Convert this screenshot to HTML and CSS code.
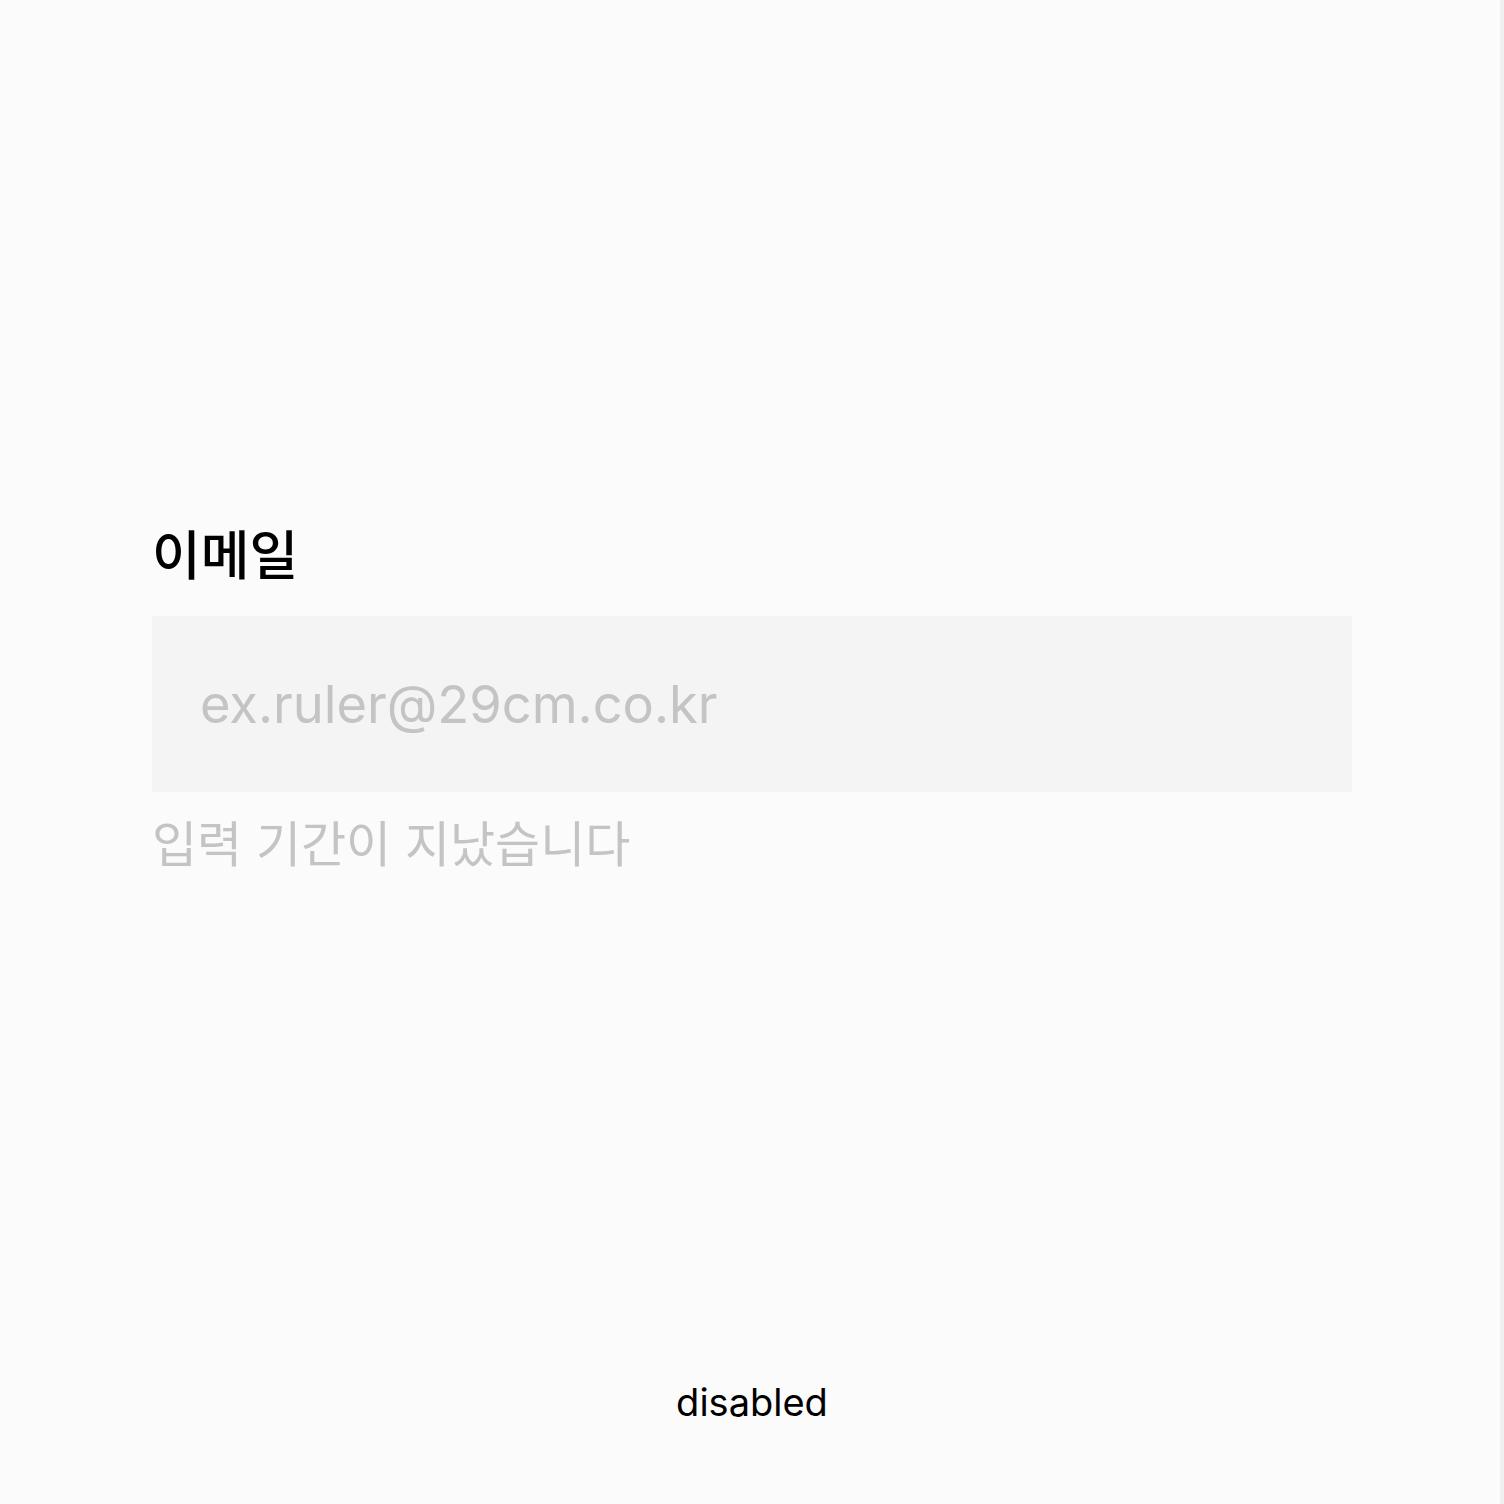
FILE: index.html
```html
<!DOCTYPE html>
<html lang="ko">
<head>
<meta charset="utf-8">
<link rel="stylesheet" href="styles.css">
</head>
<body>
<div class="page">
  <main class="stage">
    <div class="field">
      <label class="label" for="email">이메일</label>
      <input id="email" class="input" type="email" placeholder="ex.ruler@29cm.co.kr" disabled>
      <p class="helper">입력 기간이 지났습니다</p>
    </div>
  </main>
  <div class="caption">disabled</div>
</div>
</body>
</html>
```
FILE: styles.css
```css
html, body {
  margin: 0;
  padding: 0;
}
html {
  background: #f0f0f0;
}
body {
  width: 1500px;
  height: 1504px;
  background: #fbfbfb;
  font-family: Inter, "Noto Sans CJK KR", sans-serif;
  overflow: hidden;
}
.page {
  height: 100%;
  display: flex;
  flex-direction: column;
}
.stage {
  flex: 1;
  display: flex;
  align-items: center;
  padding: 21px 152px 0;
}
.field {
  width: 1200px;
  display: flex;
  flex-direction: column;
}
.label {
  font-size: 53px;
  font-weight: 500;
  color: #000;
  line-height: 64px;
  margin-bottom: 28px;
}
.input {
  box-sizing: border-box;
  width: 1200px;
  height: 176px;
  border: none;
  outline: none;
  background: #f4f4f4;
  padding: 0 48px;
  font-family: Inter, "Noto Sans CJK KR", sans-serif;
  font-size: 52.4px;
  color: #c4c4c4;
}
.input::placeholder {
  color: #c4c4c4;
}
.helper {
  margin: 21px 0 0;
  font-size: 49px;
  line-height: 64px;
  color: #c4c4c4;
}
.caption {
  text-align: center;
  font-size: 38px;
  color: #000;
  padding: 0 0 80px 4px;
  line-height: 44px;
}
```
